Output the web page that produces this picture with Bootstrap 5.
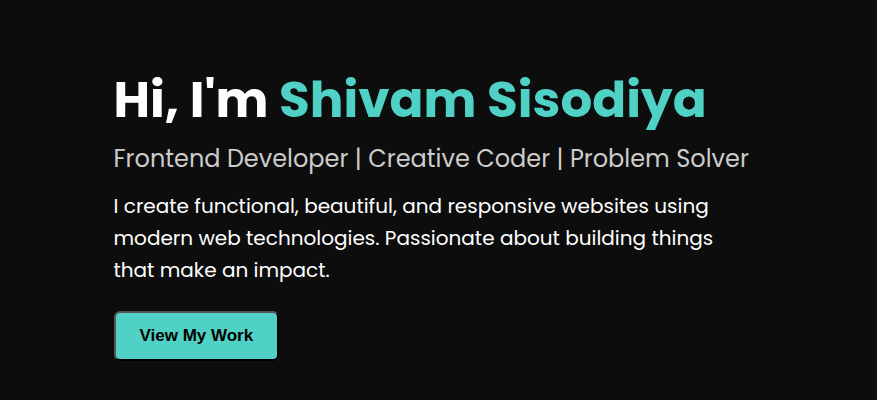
<!DOCTYPE html>
<html lang="en">
<head>
<meta charset="utf-8">
<meta name="viewport" content="width=device-width, initial-scale=1">
<title>Shivam Sisodiya</title>
<link rel="stylesheet" href="https://cdn.jsdelivr.net/npm/bootstrap@5.3.0/dist/css/bootstrap.min.css">
<style>
  body { background: #0d0d0d; color: #fff; font-family: Poppins, Inter, sans-serif; }
  .hero { max-width: 650px; padding: 60px 0 38px; }
  .hero-title { font-size: 50px; line-height: 80px; }
  .accent { color: #4fd1c5; }
  .hero-role { font-size: 24px; line-height: 38px; margin-bottom: 12px; color: #ccc; }
  .hero-text { font-size: 20px; line-height: 32px; max-width: 610px; margin-bottom: 25px; }
  .hero-btn { font-family: "Liberation Sans", Arial, sans-serif; font-size: 17px; line-height: 22px; padding: 12px 24px; color: #000; background: #4fd1c5; border: 2px outset #000; border-radius: 6px; }
</style>
</head>
<body>
<main class="hero mx-auto">
  <h1 class="hero-title fw-bold mb-0">Hi, I'm <span class="accent">Shivam Sisodiya</span></h1>
  <p class="hero-role">Frontend Developer | Creative Coder | Problem Solver</p>
  <p class="hero-text">I create functional, beautiful, and responsive websites using modern web technologies. Passionate about building things that make an impact.</p>
  <button type="button" class="hero-btn fw-bold">View My Work</button>
</main>
<script src="https://cdn.jsdelivr.net/npm/bootstrap@5.3.0/dist/js/bootstrap.bundle.min.js"></script>
</body>
</html>
